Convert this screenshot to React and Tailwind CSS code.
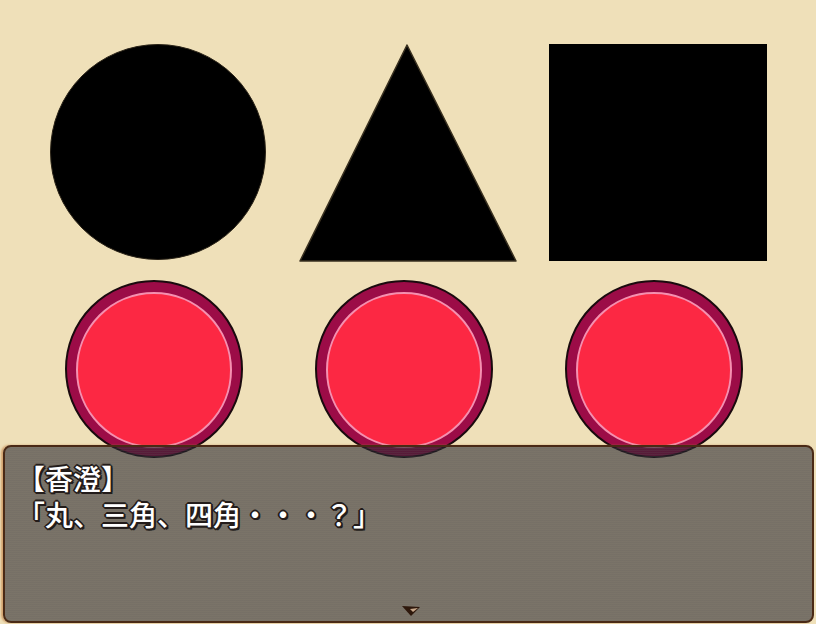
import React from "react";

const outline =
  "[text-shadow:-1px_-1px_0_#231c1a,1px_-1px_0_#231c1a,-1px_1px_0_#231c1a,1px_1px_0_#231c1a,0_2px_0_#231c1a,2px_0_0_#231c1a,-2px_0_0_#231c1a,0_-2px_0_#231c1a,2px_2px_0_#231c1a]";

function RedButton() {
  return (
    <div className="w-[178px] h-[178px] rounded-full border-2 border-[#1a0a0e] bg-[#9c0c47] flex items-center justify-center shrink-0">
      <div className="w-[156px] h-[156px] mt-[2px] rounded-full border-2 border-[#f590b0] bg-[#fc2843]" />
    </div>
  );
}

function NextCursor() {
  return (
    <svg width="20" height="12" viewBox="0 0 20 12">
      <polygon points="1,1 19,2 10,11" fill="#2e180c" />
      <polygon points="9,4 17,3 12,7" fill="#c9a98c" />
    </svg>
  );
}

export default function App() {
  return (
    <div className="relative w-[816px] h-[624px] overflow-hidden bg-[#efe0b9] font-['Noto_Sans_CJK_JP','Noto_Sans',sans-serif]">
      {/* shapes */}
      <div className="flex items-start pt-[44px] pl-[50px]">
        <div className="w-[216px] h-[216px] rounded-full bg-black border border-[#2b2418]" />
        <svg width="219" height="218" viewBox="0 0 219 218" className="ml-[33px]">
          <polygon points="108,1 1,217 217,217" fill="#000" stroke="#3a3120" strokeWidth="1.5" strokeLinejoin="round" />
        </svg>
        <div className="ml-[31px] w-[218px] h-[217px] bg-black" />
      </div>

      {/* buttons */}
      <div className="flex items-start pt-[18px] pl-[65px] gap-[72px]">
        <RedButton />
        <RedButton />
        <RedButton />
      </div>

      {/* message window */}
      <div className="absolute left-[3px] top-[445px] w-[811px] h-[178px] rounded-[8px] border-2 border-[#4a2a16] shadow-[-2px_0_2px_rgba(190,120,60,0.6)] bg-[repeating-linear-gradient(to_bottom,rgba(38,37,46,0.58)_0px,rgba(38,37,46,0.58)_1px,rgba(54,52,58,0.65)_1px,rgba(54,52,58,0.65)_2px)]">
        <div className={`pl-[12px] pt-[13px] text-[28px] leading-[36px] font-medium text-white ${outline}`}>
          <div>【香澄】</div>
          <div>「丸、三角、四角・・・？」</div>
        </div>
        <div className="absolute left-[396px] bottom-[4px]">
          <NextCursor />
        </div>
      </div>
    </div>
  );
}
